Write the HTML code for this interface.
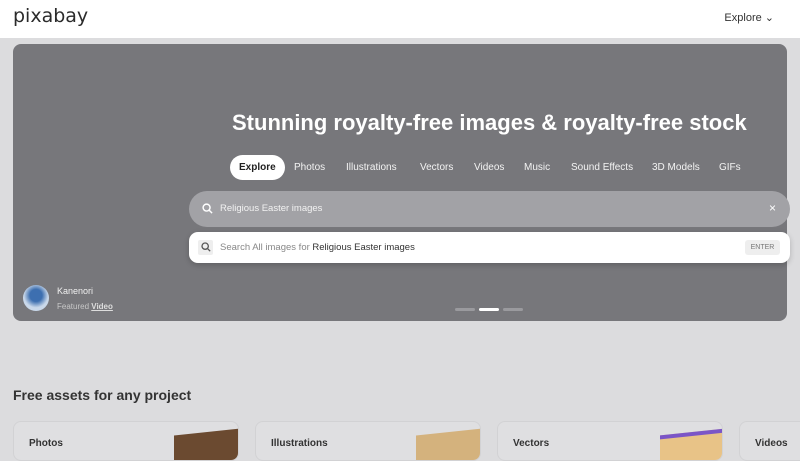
<!DOCTYPE html>
<html><head><style>
*{margin:0;padding:0;box-sizing:border-box}
body{width:800px;height:450px;overflow:hidden;background:#dcdcde;font-family:"Liberation Sans",sans-serif;position:relative}
.hdr{position:absolute;left:0;top:0;width:800px;height:38px;background:#fff}
.logo{position:absolute;left:13px;top:5px;font-size:19px;color:#2b2b2b;font-family:"DejaVu Sans",sans-serif}
.exp{position:absolute;right:26px;top:11px;font-size:11px;color:#333}
.hero{position:absolute;left:13px;top:44px;width:774px;height:277px;background:#77777b;border-radius:8px}
h1{position:absolute;left:232px;top:110px;font-size:22px;color:#fff;font-weight:bold;white-space:nowrap}
.tabs{position:absolute;top:155px;left:230px;height:25px}
.tab{position:absolute;top:0;height:25px;line-height:25px;font-size:10px;color:#f3f3f3;white-space:nowrap}
.sel{background:#fff;color:#222;border-radius:13px;padding:0 9px;font-weight:bold}
.s1{position:absolute;left:189px;top:191px;width:601px;height:36px;background:#a2a2a6;border-radius:18px}
.s2{position:absolute;left:189px;top:232px;width:601px;height:31px;background:#fff;border-radius:9px;box-shadow:0 2px 6px rgba(0,0,0,.2)}
.dot{position:absolute;top:308px;height:3px;width:20px;border-radius:2px;background:#9a9a9e}
.card{position:absolute;top:421px;width:226px;height:40px;background:#dfdfe1;border:1px solid #d2d2d4;border-radius:8px;overflow:hidden}
.card span{position:absolute;left:15px;top:16px;font-size:10px;color:#333;font-weight:bold}
</style></head><body>
<div class="hdr"><div class="logo">pixabay</div><div class="exp">Explore &#8964;</div></div>
<div class="hero">
<div style="position:absolute;left:10px;top:241px;width:26px;height:26px;border-radius:50%;background:radial-gradient(circle at 50% 40%,#3d6fb0 30%,#c9d8ea 60%)"></div>
<div style="position:absolute;left:44px;top:242px;font-size:9px;color:#f0f0f0">Kanenori</div>
<div style="position:absolute;left:44px;top:258px;font-size:8px;color:#c8c8c8">Featured <b style="text-decoration:underline;color:#ddd">Video</b></div>
</div>
<h1>Stunning royalty-free images &amp; royalty-free stock</h1>
<div class="tabs">
<div class="tab sel" style="left:0">Explore</div>
<div class="tab" style="left:64px">Photos</div>
<div class="tab" style="left:116px">Illustrations</div>
<div class="tab" style="left:190px">Vectors</div>
<div class="tab" style="left:244px">Videos</div>
<div class="tab" style="left:294px">Music</div>
<div class="tab" style="left:341px">Sound Effects</div>
<div class="tab" style="left:422px">3D Models</div>
<div class="tab" style="left:489px">GIFs</div>
</div>
<div class="s1">
<svg style="position:absolute;left:13px;top:12px" width="11" height="11" viewBox="0 0 12 12"><circle cx="5" cy="5" r="3.8" fill="none" stroke="#fff" stroke-width="1.6"/><path d="M8 8l3 3" stroke="#fff" stroke-width="1.6"/></svg>
<div style="position:absolute;left:31px;top:12px;font-size:9.5px;color:#f2f2f2">Religious Easter images</div>
<div style="position:absolute;right:14px;top:10px;font-size:12px;color:#fff">×</div>
</div>
<div class="s2">
<div style="position:absolute;left:9px;top:8px;width:15px;height:15px;background:#eee;border-radius:2px"></div>
<svg style="position:absolute;left:12px;top:10px" width="10" height="10" viewBox="0 0 12 12"><circle cx="5" cy="5" r="3.8" fill="none" stroke="#555" stroke-width="1.6"/><path d="M8 8l3 3" stroke="#555" stroke-width="1.6"/></svg>
<div style="position:absolute;left:31px;top:10px;font-size:9.5px;color:#888">Search All images for <span style="color:#333">Religious Easter images</span></div>
<div style="position:absolute;right:10px;top:8px;width:35px;height:15px;background:#eee;border-radius:3px;font-size:7px;color:#777;text-align:center;line-height:15px">ENTER</div>
</div>
<div class="dot" style="left:455px"></div><div class="dot" style="left:479px;background:#fff"></div><div class="dot" style="left:503px"></div>
<div style="position:absolute;left:13px;top:387px;font-size:14px;font-weight:bold;color:#333">Free assets for any project</div>
<div class="card" style="left:13px"><span>Photos</span><div style="position:absolute;left:160px;top:10px;width:66px;height:40px;background:#6b4a30;transform:skewY(-6deg)"></div></div>
<div class="card" style="left:255px"><span>Illustrations</span><div style="position:absolute;left:160px;top:10px;width:66px;height:40px;background:#d4b27d;transform:skewY(-6deg)"></div></div>
<div class="card" style="left:497px"><span>Vectors</span><div style="position:absolute;left:162px;top:10px;width:64px;height:40px;background:#e8c387;border-top:4px solid #7b55c7;transform:skewY(-6deg)"></div></div>
<div class="card" style="left:739px"><span>Videos</span></div>
</body></html>
